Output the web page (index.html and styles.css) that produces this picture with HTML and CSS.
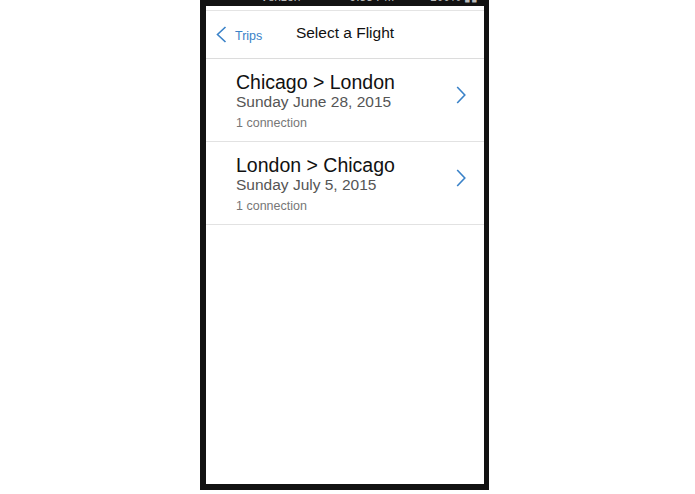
FILE: index.html
```html
<!DOCTYPE html>
<html lang="en">
<head>
    <meta charset="UTF-8">
    <meta name="viewport" content="width=device-width, initial-scale=1.0">
    <title>Select a Flight</title>
    <link rel="stylesheet" href="styles.css">
</head>
<body>
    <div class="phone">
        <div class="status-bar">
            <span class="carrier">&bull;&bull;&bull;&bull;&bull; Verizon &#8963;</span>
            <span class="clock">9:55 PM</span>
            <span class="battery">100% &#9646;&#9646;</span>
        </div>
        <div class="screen">
            <div class="nav">
                <a class="back" href="#">
                    <svg width="11" height="17" viewBox="0 0 11 17"><polyline points="9.5,1 1.5,8.5 9.5,16" fill="none" stroke="#3a82c8" stroke-width="1.6"/></svg>
                    <span>Trips</span>
                </a>
                <h1 class="title">Select a Flight</h1>
                <div></div>
            </div>

            <div class="flight">
                <div class="info">
                    <p class="route">Chicago &gt; London</p>
                    <p class="date">Sunday June 28, 2015</p>
                    <p class="stops">1 connection</p>
                </div>
                <svg class="chevron" width="10" height="18" viewBox="0 0 10 18"><polyline points="1.2,1 8.8,9 1.2,17" fill="none" stroke="#3a82c8" stroke-width="1.6"/></svg>
            </div>

            <div class="flight">
                <div class="info">
                    <p class="route">London &gt; Chicago</p>
                    <p class="date">Sunday July 5, 2015</p>
                    <p class="stops">1 connection</p>
                </div>
                <svg class="chevron" width="10" height="18" viewBox="0 0 10 18"><polyline points="1.2,1 8.8,9 1.2,17" fill="none" stroke="#3a82c8" stroke-width="1.6"/></svg>
            </div>
        </div>
    </div>
</body>
</html>
```

FILE: styles.css
```css
body {
    margin: 0;
    background: #fff;
    font-family: "Liberation Sans", Arial, sans-serif;
}
.phone {
    width: 289px;
    height: 490px;
    margin-left: 200px;
    background: #121212;
    padding: 0 5px 6px 6px;
    box-sizing: border-box;
    display: flex;
    flex-direction: column;
}
.status-bar {
    height: 6px;
    overflow: hidden;
    display: flex;
    justify-content: space-between;
    align-items: flex-start;
    padding: 0 6px 0 30px;
    color: #bbb;
    font-size: 12px;
}
.status-bar span {
    line-height: 14px;
    margin-top: -10px;
}
.screen {
    flex: 1;
    background: #fff;
    border-top: 4px solid #fff;
}
.nav {
    display: grid;
    grid-template-columns: 1fr auto 1fr;
    align-items: center;
    height: 47px;
    border-top: 1px solid #e4e4e4;
    border-bottom: 1px solid #dcdcdc;
}
.back {
    display: flex;
    align-items: center;
    gap: 8px;
    padding-left: 10px;
    color: #3a82c8;
    text-decoration: none;
    font-size: 12.5px;
    line-height: 15px;
}
.back span {
    margin-top: 3px;
}
.title {
    margin: 0 0 3px;
    font-size: 15.5px;
    line-height: 18px;
    font-weight: normal;
    color: #111;
}
.flight {
    display: flex;
    align-items: flex-start;
    padding: 12px 18px 10px 30px;
    border-bottom: 1px solid #e2e2e2;
}
.info {
    flex: 1;
}
.info p {
    margin: 0;
}
.route {
    font-size: 19.5px;
    line-height: 22px;
    color: #111;
}
.date {
    font-size: 15.5px;
    line-height: 18px;
    color: #555;
}
.stops {
    font-size: 12.5px;
    line-height: 15px;
    margin-top: 5px !important;
    color: #777;
}
.chevron {
    margin-top: 15px;
}
```
